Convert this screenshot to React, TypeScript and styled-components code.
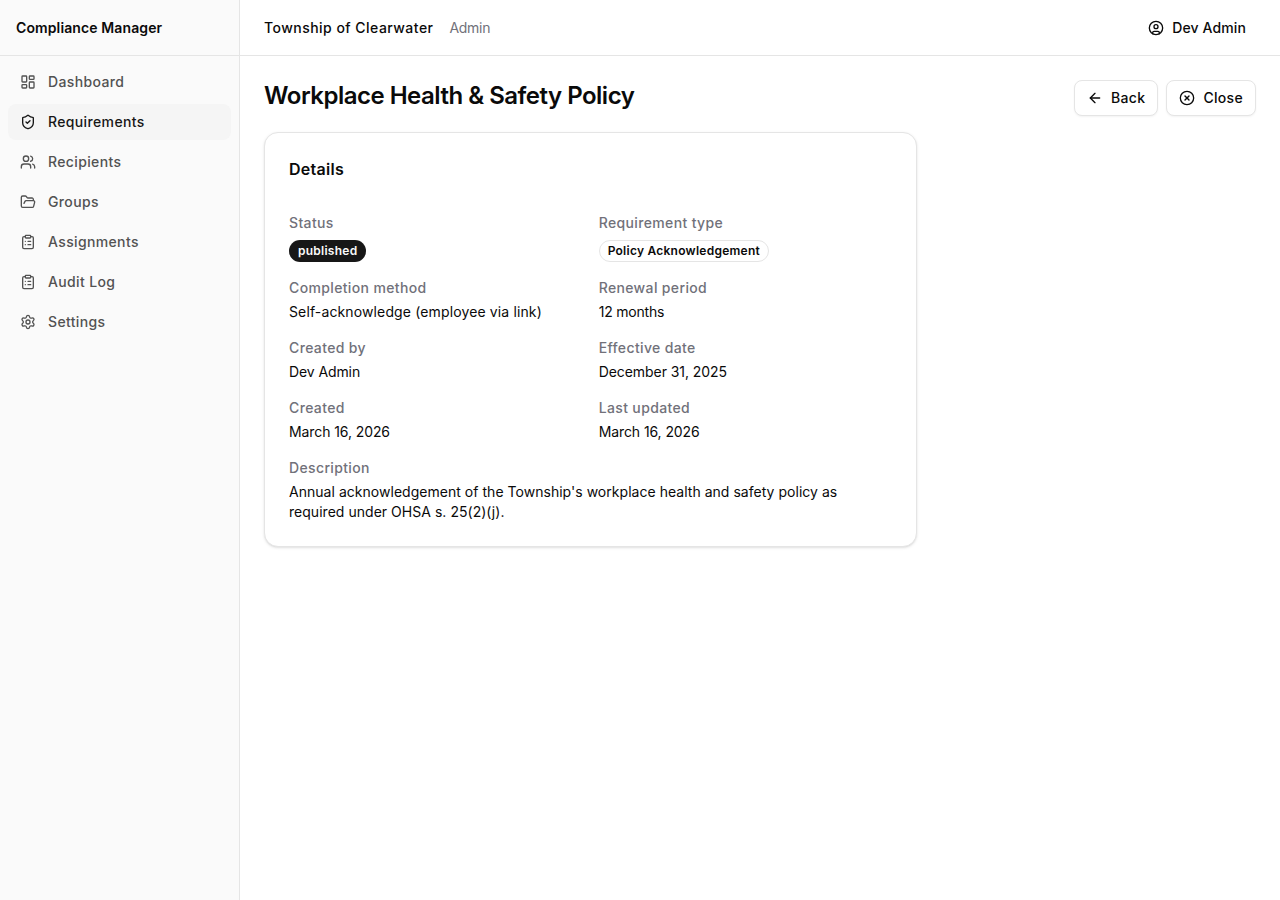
import { FC } from 'react';
import styled, { createGlobalStyle } from 'styled-components';
import {
  ArrowLeft,
  CircleUser,
  CircleX,
  ClipboardList,
  FolderOpen,
  LayoutDashboard,
  Settings,
  ShieldCheck,
  Users,
} from 'lucide-react';

const GlobalStyle = createGlobalStyle`
  html, body {
    margin: 0;
    padding: 0;
    background: #fff;
    font-family: Inter, "Liberation Sans", sans-serif;
    color: #0a0a0a;
  }
  * {
    box-sizing: border-box;
  }
`;

const Shell = styled.div`
  display: flex;
  height: 900px;
  overflow: hidden;
`;

const Sidebar = styled.aside`
  width: 240px;
  flex-shrink: 0;
  background: #fafafa;
  border-right: 1px solid #e5e5e5;
`;

const Brand = styled.div`
  height: 56px;
  display: flex;
  align-items: center;
  padding: 0 16px;
  border-bottom: 1px solid #e5e5e5;
  font-size: 14px;
  font-weight: 600;
  letter-spacing: 0.11px;
  color: #0a0a0a;
`;

const Nav = styled.nav`
  display: flex;
  flex-direction: column;
  gap: 4px;
  padding: 8px;
`;

const NavItem = styled.a<{ $active?: boolean }>`
  display: flex;
  align-items: center;
  gap: 12px;
  height: 36px;
  padding: 0 12px;
  border-radius: 8px;
  font-size: 14px;
  font-weight: 500;
  letter-spacing: 0.36px;
  color: ${(p) => (p.$active ? '#171717' : '#525252')};
  background: ${(p) => (p.$active ? '#f5f5f5' : 'transparent')};
`;

const NavLabel = styled.span`
  padding-bottom: 2px;
`;

const Main = styled.div`
  flex: 1;
  min-width: 0;
  display: flex;
  flex-direction: column;
`;

const TopBar = styled.header`
  height: 56px;
  flex-shrink: 0;
  display: flex;
  align-items: center;
  justify-content: space-between;
  padding: 0 24px;
  border-bottom: 1px solid #e5e5e5;
`;

const Org = styled.div`
  display: flex;
  align-items: center;
  gap: 16px;
`;

const OrgName = styled.span`
  font-size: 14px;
  font-weight: 500;
  letter-spacing: 0.47px;
`;

const Role = styled.span`
  font-size: 14px;
  letter-spacing: -0.3px;
  color: #71717a;
`;

const UserButton = styled.div`
  display: flex;
  align-items: center;
  gap: 8px;
  height: 36px;
  padding: 0 10px 0 0;
  font-size: 14px;
  font-weight: 500;
  letter-spacing: 0.12px;
`;

const Content = styled.main`
  padding: 24px;
`;

const PageHead = styled.div`
  display: flex;
  align-items: flex-start;
  justify-content: space-between;
  margin-bottom: 16px;
`;

const Title = styled.h1`
  margin: 0;
  font-size: 24px;
  line-height: 32px;
  font-weight: 600;
  letter-spacing: -0.5px;
`;

const Actions = styled.div`
  display: flex;
  gap: 8px;
`;

const OutlineButton = styled.button`
  display: flex;
  align-items: center;
  gap: 8px;
  height: 36px;
  padding: 0 12px;
  background: #fff;
  border: 1px solid #e5e5e5;
  border-radius: 8px;
  box-shadow: 0 1px 2px rgba(0, 0, 0, 0.05);
  font-family: inherit;
  font-size: 14px;
  font-weight: 500;
  letter-spacing: 0.32px;
  color: #0a0a0a;
`;

const ButtonLabel = styled.span`
  padding-bottom: 2px;
`;

const Columns = styled.div`
  display: grid;
  grid-template-columns: repeat(3, 1fr);
  gap: 24px;
`;

const Card = styled.section`
  grid-column: span 2;
  background: #fff;
  border: 1px solid #e5e5e5;
  border-radius: 14px;
  box-shadow: 0 1px 3px rgba(0, 0, 0, 0.1), 0 1px 2px -1px rgba(0, 0, 0, 0.1);
  padding: 24px;
`;

const CardTitle = styled.h2`
  margin: 0 0 32px;
  font-size: 16px;
  line-height: 24px;
  font-weight: 600;
  letter-spacing: 0.28px;
`;

const Fields = styled.div`
  display: grid;
  grid-template-columns: 1fr 1fr;
  gap: 16px;
`;

const Field = styled.div<{ $wide?: boolean }>`
  grid-column: ${(p) => (p.$wide ? 'span 2' : 'auto')};
  display: flex;
  flex-direction: column;
  align-items: flex-start;
  gap: 4px;
`;

const Label = styled.div`
  font-size: 14px;
  line-height: 20px;
  font-weight: 500;
  letter-spacing: 0.36px;
  color: #71717a;
`;

const Value = styled.div<{ $tracking?: number }>`
  font-size: 14px;
  line-height: 20px;
  letter-spacing: ${(p) => p.$tracking ?? 0}px;
  color: #0a0a0a;
`;

const Badge = styled.span<{ $outline?: boolean }>`
  display: inline-flex;
  align-items: center;
  height: 22px;
  margin-top: 3px;
  padding: 0 8px 2px;
  border-radius: 999px;
  border: 1px solid ${(p) => (p.$outline ? '#e5e5e5' : 'transparent')};
  background: ${(p) => (p.$outline ? '#fff' : '#171717')};
  color: ${(p) => (p.$outline ? '#0a0a0a' : '#fafafa')};
  font-size: 12px;
  font-weight: 600;
  letter-spacing: 0.25px;
`;

const navItems = [
  { label: 'Dashboard', icon: LayoutDashboard },
  { label: 'Requirements', icon: ShieldCheck, active: true },
  { label: 'Recipients', icon: Users },
  { label: 'Groups', icon: FolderOpen },
  { label: 'Assignments', icon: ClipboardList },
  { label: 'Audit Log', icon: ClipboardList },
  { label: 'Settings', icon: Settings },
];

const fields = [
  { label: 'Completion method', value: 'Self-acknowledge (employee via link)', tracking: 0.13 },
  { label: 'Renewal period', value: '12 months', tracking: -0.2 },
  { label: 'Created by', value: 'Dev Admin', tracking: -0.1 },
  { label: 'Effective date', value: 'December 31, 2025', tracking: -0.06 },
  { label: 'Created', value: 'March 16, 2026', tracking: -0.09 },
  { label: 'Last updated', value: 'March 16, 2026', tracking: -0.09 },
];

const App: FC = () => {
  return (
    <Shell>
      <GlobalStyle />
      <Sidebar>
        <Brand>Compliance Manager</Brand>
        <Nav>
          {navItems.map((item) => (
            <NavItem key={item.label} $active={item.active}>
              <item.icon size={16} strokeWidth={2} />
              <NavLabel>{item.label}</NavLabel>
            </NavItem>
          ))}
        </Nav>
      </Sidebar>
      <Main>
        <TopBar>
          <Org>
            <OrgName>Township of Clearwater</OrgName>
            <Role>Admin</Role>
          </Org>
          <UserButton>
            <CircleUser size={16} />
            Dev Admin
          </UserButton>
        </TopBar>
        <Content>
          <PageHead>
            <Title>Workplace Health &amp; Safety Policy</Title>
            <Actions>
              <OutlineButton>
                <ArrowLeft size={16} />
                <ButtonLabel>Back</ButtonLabel>
              </OutlineButton>
              <OutlineButton>
                <CircleX size={16} />
                <ButtonLabel>Close</ButtonLabel>
              </OutlineButton>
            </Actions>
          </PageHead>
          <Columns>
            <Card>
              <CardTitle>Details</CardTitle>
              <Fields>
                <Field>
                  <Label>Status</Label>
                  <Badge>published</Badge>
                </Field>
                <Field>
                  <Label>Requirement type</Label>
                  <Badge $outline>Policy Acknowledgement</Badge>
                </Field>
                {fields.map((f) => (
                  <Field key={f.label}>
                    <Label>{f.label}</Label>
                    <Value $tracking={f.tracking}>{f.value}</Value>
                  </Field>
                ))}
                <Field $wide>
                  <Label>Description</Label>
                  <Value $tracking={0.03}>
                    Annual acknowledgement of the Township's workplace health and safety policy as
                    required under OHSA s. 25(2)(j).
                  </Value>
                </Field>
              </Fields>
            </Card>
          </Columns>
        </Content>
      </Main>
    </Shell>
  );
};

export default App;
